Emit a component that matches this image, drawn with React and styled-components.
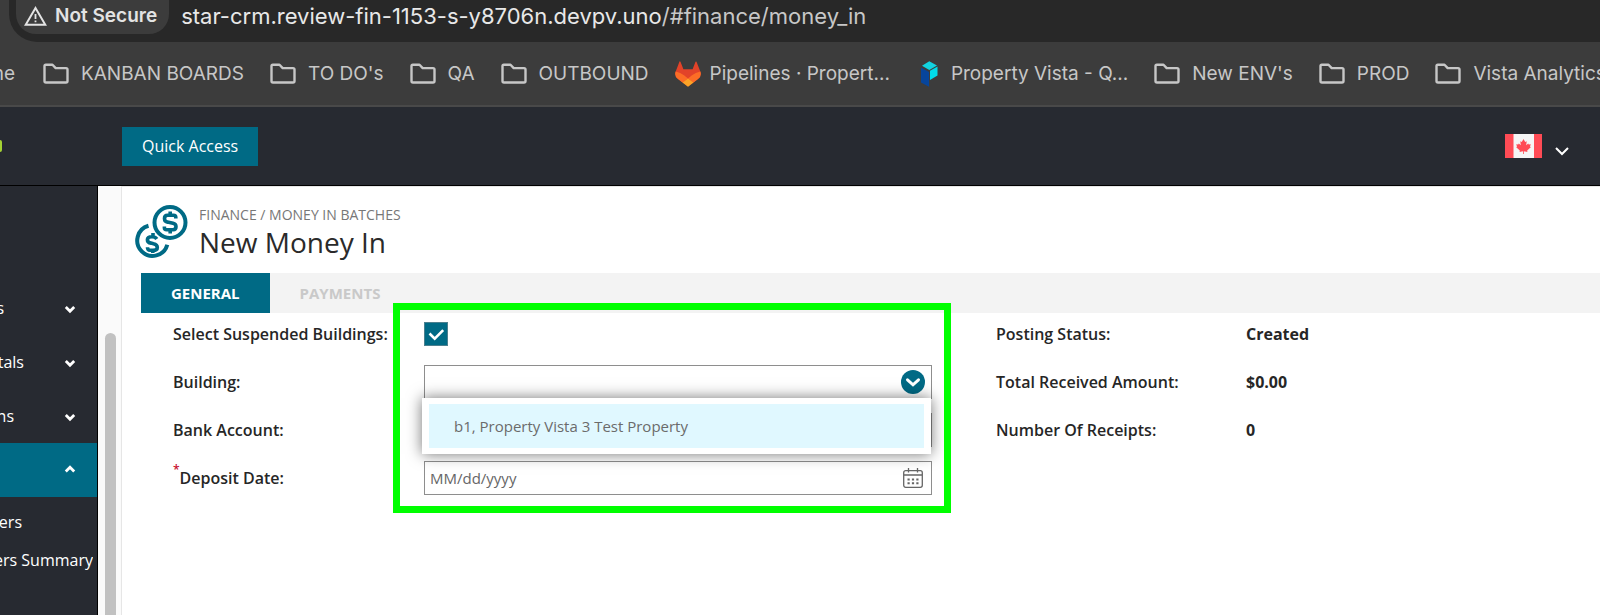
import React from 'react';
import styled, { createGlobalStyle } from 'styled-components';

const TEAL = '#006a85';
const DARK = '#272a31';

const GlobalStyle = createGlobalStyle`
  *, *::before, *::after { box-sizing: border-box; }
  body { margin: 0; background: #fff; color: #222; font-family: "Open Sans", "Noto Sans", sans-serif; }
  button, input, select { font: inherit; color: inherit; }
  a { color: inherit; text-decoration: none; }
  svg { display: block; flex: none; }
`;

const Page = styled.div`
  display: flex;
  flex-direction: column;
  min-height: 100vh;
  overflow: hidden;
`;

/* Browser bars */
const Chrome = styled.div`
  background: #3c3c3c;
  border-bottom: 2px solid #494949;
  font-family: Inter, Roboto, sans-serif;
  overflow: hidden;
`;

const AddressBar = styled.div`
  display: flex;
  align-items: flex-start;
  gap: 12px;
  height: 42px;
  margin-left: 9px;
  padding-left: 7px;
  background: #282828;
  border-bottom-left-radius: 28px;
`;

const SecurityChip = styled.button`
  display: flex;
  align-items: center;
  gap: 8px;
  height: 34px;
  padding: 0 12px 2px 8px;
  border: 0;
  border-radius: 0 0 20px 20px;
  background: #3c3c3c;
  color: #e3e3e3;
  font-size: 19px;
  font-weight: 600;
  line-height: 24px;
  white-space: nowrap;
`;

const Url = styled.span`
  color: ${(p) => (p.$dim ? '#c7c7c7' : '#e8e8e8')};
  font-size: 22px;
  line-height: 32px;
  white-space: nowrap;
`;

const Bookmarks = styled.nav`
  display: flex;
  align-items: center;
  gap: 26px;
  height: 63px;
  white-space: nowrap;
`;

const Bookmark = styled.a`
  display: flex;
  flex: none;
  align-items: center;
  justify-content: flex-end;
  gap: ${(p) => (p.$site ? 9 : 12)}px;
  width: ${(p) => (p.$width ? `${p.$width}px` : 'auto')};
  margin-right: ${(p) => (p.$width ? 2 : 0)}px;
  overflow: hidden;
  color: #c7c7c7;
  font-size: 19px;
  line-height: 24px;
`;

/* Application header */
const Header = styled.header`
  display: flex;
  align-items: center;
  justify-content: space-between;
  height: 79px;
  padding-right: 31px;
  background: ${DARK};
  border-bottom: 1px solid #000;
`;

const HeaderStart = styled.div`
  display: flex;
  align-items: center;
  gap: 120px;
`;

const LogoEdge = styled.span`
  width: 2px;
  height: 12px;
  border-radius: 0 4px 4px 0;
  background: #a4d233;
`;

const QuickAccess = styled.button`
  height: 39px;
  padding: 0 20px;
  border: 0;
  background: ${TEAL};
  color: #fff;
  font-size: 16px;
  font-weight: 500;
`;

const LanguageButton = styled.button`
  display: flex;
  align-items: flex-end;
  gap: 13px;
  padding: 0;
  border: 0;
  background: none;
`;

/* Body */
const Body = styled.div`
  display: flex;
  flex: 1;
`;

const Sidebar = styled.nav`
  flex: none;
  width: 98px;
  padding-top: 95px;
  background: ${DARK};
  border-right: 1px solid #000;
  color: #fff;
  font-size: 16px;
  font-weight: 500;
  white-space: nowrap;
`;

const NavGroup = styled.a`
  display: flex;
  align-items: center;
  justify-content: space-between;
  height: 54px;
  padding-right: 21px;
  background: ${(p) => (p.$active ? TEAL : 'transparent')};
`;

const NavEnd = styled.span`
  display: flex;
  justify-content: flex-end;
  width: ${(p) => p.$width}px;
  overflow: hidden;
`;

const SubNav = styled.div`
  display: flex;
  flex-direction: column;
  padding-top: 6px;
`;

const SubLink = styled.a`
  height: 38px;
  line-height: 38px;
`;

const Gutter = styled.div`
  flex: none;
  display: flex;
  width: 24px;
  padding: 147px 5px 0 7px;
  background: #fafafa;
  border-right: 1px solid #e6e6e6;
`;

const Thumb = styled.div`
  flex: 1;
  border-radius: 6px 6px 0 0;
  background: #c1c1c1;
`;

const Main = styled.main`
  flex: 1;
  min-width: 0;
  padding: 18px 0 0 13px;
  border-top: 1px solid #e6e6e6;
`;

const PageHead = styled.div`
  display: flex;
  align-items: flex-start;
  gap: 11px;
`;

const Crumbs = styled.div`
  color: #777;
  font-size: 14px;
  line-height: 20px;
`;

const Title = styled.h1`
  margin: 0;
  color: #2a2a2a;
  font-size: 28px;
  font-weight: 400;
  line-height: 34px;
`;

const Tabs = styled.div`
  display: flex;
  height: 40px;
  margin: 14px 0 0 6px;
  background: #f3f3f3;
`;

const Tab = styled.button`
  padding: 0 30px;
  border: 0;
  background: ${(p) => (p.$active ? TEAL : 'transparent')};
  color: ${(p) => (p.$active ? '#fff' : '#c9c9c9')};
  font-size: 15px;
  font-weight: 700;
`;

const Form = styled.form`
  display: grid;
  grid-template-columns: 759fr 604fr;
  column-gap: 64px;
  padding-left: 38px;
`;

const Fields = styled.div`
  position: relative;
  display: flex;
  flex-direction: column;
  gap: 6px;
`;

const Row = styled.div`
  display: grid;
  grid-template-columns: ${(p) => (p.$summary ? 250 : 251)}px 1fr;
  align-items: center;
  height: 42px;
  font-size: 16px;
  line-height: 24px;
`;

const Label = styled.label`
  font-weight: 600;
  color: #262626;
  white-space: nowrap;
`;

const Required = styled.sup`
  color: #c8102e;
  font-size: 12px;
  line-height: 0;
  vertical-align: 10px;
`;

const Value = styled.output`
  color: #262626;
  font-weight: 700;
`;

const Control = styled.div`
  position: relative;
  display: grid;
  align-items: center;
  > * { grid-area: 1 / 1; }
  > svg { justify-self: ${(p) => (p.$start ? 'start' : 'end')}; margin-right: ${(p) => p.$inset || 0}px; pointer-events: none; }
`;

const CheckBox = styled.input`
  appearance: none;
  width: 24px;
  height: 24px;
  margin: 0;
  border: 1px solid #4c7f8e;
  background: ${TEAL};
`;

const boxed = `
  width: 100%;
  height: 34px;
  padding: 0 5px;
  border: 1px solid #8e8e8e;
  border-radius: 0;
  background: #fff;
  font-size: 15px;
  outline: 0;
`;

const TextBox = styled.input`
  ${boxed}
  &::placeholder { color: #666; opacity: 1; }
`;

const Picker = styled.select`
  appearance: none;
  ${boxed}
`;

const Popup = styled.div`
  position: absolute;
  z-index: 1;
  top: 33px;
  left: -2px;
  right: 1px;
  padding: 6px 7px;
  background: #fff;
  box-shadow: 0 0 14px rgba(0, 0, 0, 0.55);
`;

const Option = styled.div`
  height: 44px;
  padding-left: 25px;
  background: #e0f8ff;
  color: #6b6b6b;
  font-size: 15px;
  line-height: 44px;
`;

const Highlight = styled.div`
  position: absolute;
  z-index: 2;
  top: -10px;
  bottom: -14px;
  left: 220px;
  right: -19px;
  border: 7px solid #00ff00;
  pointer-events: none;
`;

const FolderIcon = () => (
  <svg width="26" height="22" viewBox="0 0 26 22" fill="none" stroke="#c7c7c7" strokeWidth="2.4" strokeLinejoin="round">
    <path d="M1.5 4v-1q0-1.3 1.3-1.3H9.5l3.2 3.4H23q1.5 0 1.5 1.4V18q0 1.5-1.5 1.5H3q-1.5 0-1.5-1.5z" />
  </svg>
);

const WarningIcon = () => (
  <svg width="23" height="20" viewBox="0 0 23 20">
    <path d="M11.5 2L21.3 18.8H1.7z" fill="none" stroke="#e3e3e3" strokeWidth="2" />
    <path d="M10.6 8h1.8v5h-1.8zM10.6 14.4h1.8v1.8h-1.8z" fill="#e3e3e3" />
  </svg>
);

const FoxIcon = () => (
  <svg width="26" height="26" viewBox="0 0 26 26">
    <path d="M4.5.6Q5 0 5.500.8L8.400 8.200h9.200L20.500.8q.6-.8 1 0L25.300 10.500Q27 15 23 18L13 25.500 3 18Q-1 15 .7 10.500z" fill="#e24329" />
    <path d="M25.300 10.500Q20.500 11.500 17 14.300L13 17.500l5.500 4L23 18q4-3 2.300-7.500zM.7 10.500Q5.500 11.500 9 14.300l4 3.200-5.500 4L3 18Q-1 15 .7 10.500z" fill="#fc6d26" />
    <path d="M13 17.500l5.500 4L13 25.700l-5.500-4.200z" fill="#fca326" />
  </svg>
);

const VistaIcon = () => (
  <svg width="26" height="26" viewBox="0 0 26 26">
    <path d="M5 6.500L13 11v14.700L5 21.500z" fill="#07459b" />
    <path d="M13.300.3L21 4.500 13.300 8.900 6 4.800z" fill="#12d3e0" />
    <path d="M21.500 5.500V14.500L14 19V9.800z" fill="#00dcea" />
  </svg>
);

const FlagIcon = () => (
  <svg width="37" height="24" viewBox="0 0 37 24">
    <path d="M0 0h37v24H0z" fill="#f5f5f5" />
    <path d="M0 0h8.500v24H0zM29 0h8v24H29z" fill="#ff4b55" />
    <path d="M18.500 5l1.700 3 1.500-.8-.5 4 2-1.800.6 1.200 2-.3-.8 2.300.8.7-3.600 3.200.2 1.400-3.500-.6V20h-.8v-2.700l-3.500.6.200-1.400-3.600-3.200.8-.7-.8-2.300 2 .3.600-1.200 2 1.800-.5-4 1.500.8z" fill="#ff4b55" />
  </svg>
);

const LanguageChevron = () => (
  <svg width="14" height="14" viewBox="0 0 14 14" fill="none" stroke="#fff" strokeWidth="2">
    <path d="M1 4l6 6 6-6" />
  </svg>
);

const NavChevron = ({ up }) => (
  <svg width="12" height="12" viewBox="0 0 12 12" fill="none" stroke="#fff" strokeWidth="2.800">
    <path d={up ? 'M1.800 7.500L6 3.300l4.200 4.200' : 'M1.800 5L6 9.200 10.200 5'} />
  </svg>
);

const CoinsIcon = () => (
  <svg width="53" height="53" viewBox="0 0 53 53" fill="none" stroke={TEAL}>
    <circle cx="35" cy="17.500" r="15.500" strokeWidth="4" />
    <path d="M13.500 20.800A15.300 15.300 0 1 0 32.300 39.700" strokeWidth="4" />
    <g strokeWidth="3.600">
      <path d="M40.800 13.500v-1.200q0-2-2.300-2h-6q-3 0-3 3.300t3 3.500l5.500 1.200q3 .6 3 3.400t-3 3h-6.300q-2.300 0-2.300-2v-1.200M35.200 6.500v4M35.200 24.500v4" />
      <path d="M21.800 34q-1.500-2.300-4.800-2.300-4.600 0-4.600 3t3.600 3.400l2.500.6q3.800.8 3.800 3.700t-4.300 2.900h-3q-2.500 0-2.500-3M18 28v4M17.800 44.500v3.500" />
    </g>
  </svg>
);

const CheckIcon = () => (
  <svg width="24" height="24" viewBox="0 0 24 24" fill="none" stroke="#fff" strokeWidth="2.600">
    <path d="M5.500 11.500l5.200 5.200 8.500-8.500" />
  </svg>
);

const PickerIcon = () => (
  <svg width="24" height="24" viewBox="0 0 24 24">
    <circle cx="12" cy="12" r="12" fill={TEAL} />
    <path d="M6.500 9.800l5.500 5 5.500-5" fill="none" stroke="#fff" strokeWidth="3" strokeLinecap="round" />
  </svg>
);

const CalendarIcon = () => (
  <svg width="20" height="20" viewBox="0 0 20 20" fill="none" stroke="#666">
    <rect x=".7" y="2.700" width="18.600" height="16.600" rx="2" strokeWidth="1.300" />
    <path d="M1 7h18M5.500 0v4.500M14.500 0v4.500" strokeWidth="1.300" />
    <path d="M4.500 11.500h2.200M8.900 11.500h2.200M13.300 11.500h2.200M4.500 15.200h2.200M8.900 15.200h2.200M13.300 15.200h2.200" strokeWidth="2" />
  </svg>
);

const ICONS = { folder: FolderIcon, fox: FoxIcon, vista: VistaIcon };

const BOOKMARKS = [
  ['folder', 'KANBAN BOARDS'],
  ['folder', "TO DO's"],
  ['folder', 'QA'],
  ['folder', 'OUTBOUND'],
  ['fox', 'Pipelines · Propert...'],
  ['vista', 'Property Vista - Q...'],
  ['folder', "New ENV's"],
  ['folder', 'PROD'],
  ['folder', 'Vista Analytics'],
];

const SUMMARY = [
  ['Posting Status:', 'Created'],
  ['Total Received Amount:', '$0.00'],
  ['Number Of Receipts:', '0'],
];

export default function App() {
  return (
    <Page>
      <GlobalStyle />
      <Chrome>
        <AddressBar>
          <SecurityChip type="button"><WarningIcon />Not Secure</SecurityChip>
          <Url>star-crm.review-fin-1153-s-y8706n.devpv.uno<Url $dim>/#finance/money_in</Url></Url>
        </AddressBar>
        <Bookmarks aria-label="Bookmarks">
          <Bookmark href="#" $width={15}>ne</Bookmark>
          {BOOKMARKS.map(([icon, name]) => {
            const Icon = ICONS[icon];
            return <Bookmark key={name} href="#" $site={icon !== 'folder'}><Icon />{name}</Bookmark>;
          })}
        </Bookmarks>
      </Chrome>
      <Header>
        <HeaderStart>
          <LogoEdge />
          <QuickAccess type="button">Quick Access</QuickAccess>
        </HeaderStart>
        <LanguageButton type="button" aria-label="Language"><FlagIcon /><LanguageChevron /></LanguageButton>
      </Header>
      <Body>
        <Sidebar aria-label="Main">
          <NavGroup href="#"><NavEnd $width={4}>s</NavEnd><NavChevron /></NavGroup>
          <NavGroup href="#"><NavEnd $width={24}>tals</NavEnd><NavChevron /></NavGroup>
          <NavGroup href="#"><NavEnd $width={14}>ns</NavEnd><NavChevron /></NavGroup>
          <NavGroup href="#" $active aria-label="Finance"><span /><NavChevron up /></NavGroup>
          <SubNav>
            <SubLink href="#"><NavEnd $width={22}>fers</NavEnd></SubLink>
            <SubLink href="#"><NavEnd $width={93}>fers Summary</NavEnd></SubLink>
          </SubNav>
        </Sidebar>
        <Gutter><Thumb /></Gutter>
        <Main>
          <PageHead>
            <CoinsIcon />
            <div>
              <Crumbs>FINANCE / MONEY IN BATCHES</Crumbs>
              <Title>New Money In</Title>
            </div>
          </PageHead>
          <Tabs role="tablist">
            <Tab type="button" role="tab" aria-selected="true" $active>GENERAL</Tab>
            <Tab type="button" role="tab" aria-selected="false" disabled>PAYMENTS</Tab>
          </Tabs>
          <Form>
            <Fields>
              <Row>
                <Label htmlFor="suspended">Select Suspended Buildings:</Label>
                <Control $start><CheckBox id="suspended" type="checkbox" defaultChecked /><CheckIcon /></Control>
              </Row>
              <Row>
                <Label htmlFor="building">Building:</Label>
                <Control $inset={7}>
                  <Picker id="building"><option value="" /></Picker>
                  <PickerIcon />
                  <Popup role="listbox" aria-label="Building">
                    <Option role="option" aria-selected="true">b1, Property Vista 3 Test Property</Option>
                  </Popup>
                </Control>
              </Row>
              <Row>
                <Label htmlFor="account">Bank Account:</Label>
                <Control><TextBox id="account" type="text" /></Control>
              </Row>
              <Row>
                <Label htmlFor="deposit"><Required>*</Required>Deposit Date:</Label>
                <Control $inset={9}><TextBox id="deposit" type="text" placeholder="MM/dd/yyyy" /><CalendarIcon /></Control>
              </Row>
              <Highlight />
            </Fields>
            <Fields>
              {SUMMARY.map(([name, value], i) => (
                <Row key={name} $summary>
                  <Label htmlFor={`sum${i}`}>{name}</Label>
                  <Value id={`sum${i}`}>{value}</Value>
                </Row>
              ))}
            </Fields>
          </Form>
        </Main>
      </Body>
    </Page>
  );
}
